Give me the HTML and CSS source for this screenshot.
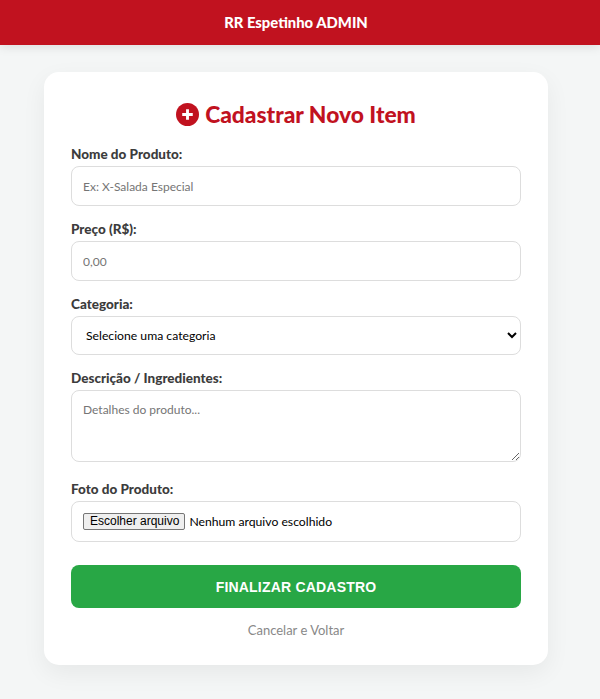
FILE: index.html
```html
<!DOCTYPE html>
<html lang="pt-BR">
<head>
    <meta charset="UTF-8">
    <meta name="viewport" content="width=device-width, initial-scale=1.0">
    <title>Cadastrar Novo Item</title>
    <link rel="stylesheet" href="styles.css">
</head>
<body>
    <div class="topbar">RR Espetinho ADMIN</div>
    <div class="card">
        <h2 class="title">
            <svg class="title-icon" viewBox="0 0 24 24" width="23" height="23">
                <circle cx="12" cy="12" r="12" fill="#c1121f"/>
                <path d="M12 6.5v11M6.5 12h11" stroke="#fff" stroke-width="3" fill="none"/>
            </svg>
            Cadastrar Novo Item
        </h2>
        <form>
            <div class="field">
                <label class="field-label" for="nome">Nome do Produto:</label>
                <input class="control" id="nome" type="text" placeholder="Ex: X-Salada Especial">
            </div>
            <div class="field">
                <label class="field-label" for="preco">Preço (R$):</label>
                <input class="control" id="preco" type="text" placeholder="0,00">
            </div>
            <div class="field">
                <label class="field-label" for="categoria">Categoria:</label>
                <select class="control select" id="categoria">
                    <option>Selecione uma categoria</option>
                </select>
            </div>
            <div class="field">
                <label class="field-label" for="descricao">Descrição / Ingredientes:</label>
                <textarea class="control textarea" id="descricao" placeholder="Detalhes do produto..."></textarea>
            </div>
            <div class="field">
                <div class="field-label">Foto do Produto:</div>
                <label class="control file">
                    <input class="file-input" type="file" accept="image/*">
                    <span class="file-button">Escolher arquivo</span>
                    <span class="file-name">Nenhum arquivo escolhido</span>
                </label>
            </div>
            <button class="submit" type="button">FINALIZAR CADASTRO</button>
        </form>
        <a class="back" href="#">Cancelar e Voltar</a>
    </div>
</body>
</html>
```

FILE: styles.css
```css
body {
    margin: 0;
    background-color: #f4f6f6;
    color: #333;
    font-family: Lato, "Open Sans", Arial, sans-serif;
}
.topbar {
    height: 45px;
    padding-right: 8px;
    line-height: 45px;
    background-color: #c1121f;
    color: white;
    text-align: center;
    font-size: 14.8px;
    font-weight: 900;
    box-shadow: 0 2px 10px rgba(0, 0, 0, 0.1);
}
.card {
    box-sizing: border-box;
    width: 504px;
    margin: 27px 0 34px 44px;
    padding: 27px;
    background-color: white;
    border-radius: 15px;
    box-shadow: 0 8px 25px rgba(0, 0, 0, 0.06);
}
.title {
    display: flex;
    justify-content: center;
    align-items: center;
    gap: 6px;
    height: 30px;
    margin: 0 0 17px 0;
    color: #c1121f;
    font-size: 22.8px;
    font-weight: 900;
}
.title-icon {
    flex: none;
}
.field {
    margin-bottom: 15px;
}
.field-label {
    display: block;
    margin-bottom: 3px;
    font-size: 13.5px;
    font-weight: 900;
    line-height: 17px;
    color: #3c3c3c;
}
.control {
    display: block;
    box-sizing: border-box;
    width: 100%;
    height: 40px;
    padding: 11px;
    border: 1px solid #ddd;
    border-radius: 8px;
    background-color: white;
    font-family: inherit;
    font-size: 12px;
}
.select {
    height: 39px;
    padding: 0 10px;
    color: black;
    font-size: 12.2px;
}
.textarea {
    height: 72px;
    margin-bottom: 19px;
}
.file {
    display: flex;
    align-items: center;
    height: 41px;
    color: black;
    font-size: 12.2px;
}
.file-input {
    display: none;
}
.file-button {
    box-sizing: border-box;
    height: 17px;
    margin-right: 4px;
    padding: 0 5px 0 6px;
    border: 1px solid #767676;
    border-radius: 2px;
    background-color: #efefef;
    font-family: "Liberation Sans", Arial, sans-serif;
    font-size: 12px;
    line-height: 15px;
}
.submit {
    display: block;
    width: 100%;
    height: 43px;
    margin-top: 23px;
    border: none;
    border-radius: 8px;
    background-color: #28a745;
    color: white;
    font-family: "Liberation Sans", Arial, sans-serif;
    font-size: 14px;
    font-weight: bold;
    letter-spacing: 0.2px;
}
.back {
    display: block;
    margin-top: 14px;
    color: #888;
    font-size: 13px;
    line-height: 16px;
    text-align: center;
    text-decoration: none;
}
```
